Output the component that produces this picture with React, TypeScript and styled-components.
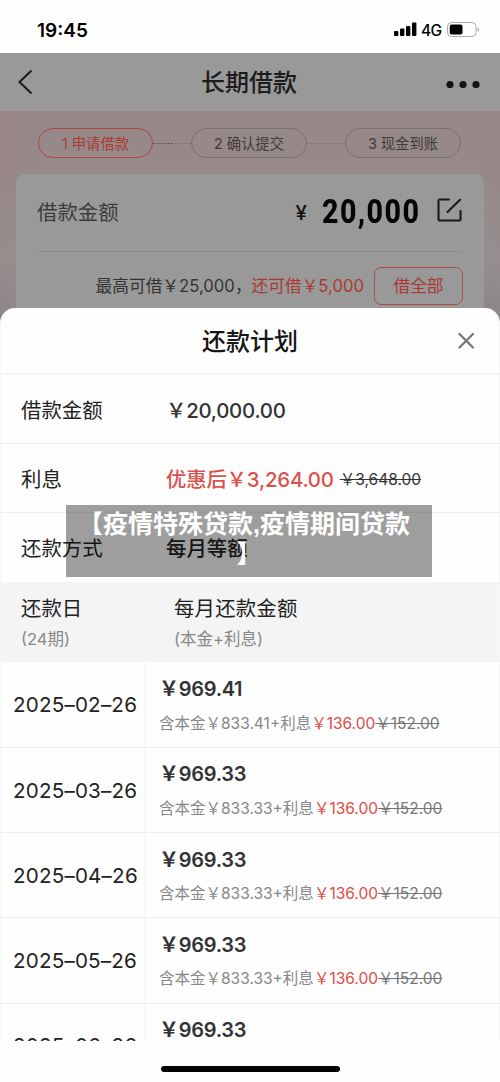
import React from "react";
import styled, { createGlobalStyle } from "styled-components";

const Global = createGlobalStyle`
  * { box-sizing: border-box; }
  body {
    margin: 0;
    background: #fff;
    font-family: Inter, "Noto Sans CJK SC", sans-serif;
    color: #222;
  }
`;

const Screen = styled.div`
  position: relative;
  width: 500px;
  height: 1082px;
  overflow: hidden;
  background: #fefefe;
  display: flex;
  flex-direction: column;
`;

const Text = styled.span<{
  $size: number;
  $color?: string;
  $weight?: number;
  $gap?: number;
  $strike?: boolean;
}>`
  display: inline-block;
  padding-top: 2px;
  font-size: ${(p) => p.$size}px;
  line-height: 1.3;
  white-space: nowrap;
  color: ${(p) => p.$color ?? "#222"};
  font-weight: ${(p) => p.$weight ?? 400};
  letter-spacing: ${(p) => p.$gap ?? 0}px;
  text-decoration: ${(p) => (p.$strike ? "line-through" : "none")};
`;

const StatusBar = styled.header`
  flex: none;
  height: 53px;
  padding: 7px 20px 0 37px;
  display: flex;
  align-items: center;
  justify-content: space-between;
`;

const NavBar = styled.nav`
  flex: none;
  height: 58px;
  padding: 0 20px 0 18px;
  background: #999;
  display: grid;
  grid-template-columns: 60px 1fr 60px;
  align-items: center;
  justify-items: center;
  > :first-child { justify-self: start; }
  > :last-child { justify-self: end; }
`;

const Backdrop = styled.section`
  flex: none;
  height: 219px;
  padding: 17px 16px 0;
  background:
    linear-gradient(90deg, rgba(160, 130, 130, 0.25), transparent 8%, transparent 95%, rgba(155, 130, 132, 0.2)),
    linear-gradient(#978888 0, #978a89 60px, #939090 150px, #868686 219px);
`;

const Steps = styled.div`
  display: flex;
  align-items: center;
  padding: 0 23px 0 22px;
`;

const Step = styled.div<{ $active?: boolean }>`
  width: ${(p) => (p.$active ? 115 : 116)}px;
  height: 30px;
  border-radius: 15px;
  border: 1px solid ${(p) => (p.$active ? "#b14542" : "#7c6f6f")};
  display: flex;
  align-items: center;
  justify-content: center;
`;

const Dash = styled.div<{ $faded?: boolean }>`
  flex: 1;
  height: 1px;
  background: repeating-linear-gradient(
    90deg,
    ${(p) => (p.$faded ? "#827575" : "#645959")} 0 2px,
    transparent 2px 3px
  );
  ${(p) => !p.$faded && "mask-image: linear-gradient(90deg, #000 52%, rgba(0, 0, 0, 0.4) 53%);"}
`;

const AmountCard = styled.div`
  margin-top: 16px;
  height: 160px;
  border-radius: 9px;
  background: #999;
  padding: 0 21px;
`;

const AmountRow = styled.div`
  height: 78px;
  border-bottom: 1px solid #8c8c8c;
  display: flex;
  align-items: center;
  justify-content: space-between;
`;

const AmountValue = styled.div`
  display: flex;
  align-items: center;
`;

const BigNumber = styled.strong`
  width: 97px;
  margin: 0 18px 0 15px;
  font: 800 32.5px/1.3 Roboto, sans-serif;
  letter-spacing: 1.6px;
  color: #050505;
  transform: scaleX(0.88);
  transform-origin: left;
`;

const EditSlot = styled.div`
  display: flex;
  padding-bottom: 5px;
  margin-right: 1px;
`;

const LimitRow = styled.div`
  height: 68px;
  display: flex;
  align-items: center;
  justify-content: flex-end;
`;

const BorrowAll = styled.button`
  width: 89px;
  height: 38px;
  margin-left: 10px;
  padding: 0;
  border: 1px solid #b04b45;
  border-radius: 7px;
  background: transparent;
  font-family: inherit;
`;

const Sheet = styled.main`
  flex: none;
  height: 733px;
  margin-top: -22px;
  border-radius: 15px 15px 0 0;
  background: #fefefe;
  border: 1px solid #f6f6f6;
  border-width: 0 1px;
  overflow: hidden;
`;

const SheetHeader = styled.div`
  height: 67px;
  border-bottom: 2px solid #f3f3f3;
  padding: 1px 24px 0;
  display: grid;
  grid-template-columns: 18px 1fr 18px;
  justify-items: center;
  align-items: center;
`;

const InfoRow = styled.div<{ $last?: boolean }>`
  height: 69px;
  border-bottom: ${(p) => (p.$last ? 0 : 1)}px solid #ededed;
  padding: ${(p) => (p.$last ? 1 : 2)}px 0 0 20px;
  display: grid;
  grid-template-columns: 145px 1fr;
  align-items: center;
`;

const InfoValue = styled.div`
  display: flex;
  align-items: center;
  gap: 6px;
`;

const TableHead = styled.div`
  height: 80px;
  padding: 0 20px;
  background: #f4f4f4;
  display: grid;
  grid-template-columns: 153px 1fr;
  align-items: center;
`;

const HeadCell = styled.div`
  display: flex;
  flex-direction: column;
  gap: 5px;
`;

const PlanList = styled.div`
  padding-top: 0.5px;
`;

const PlanRow = styled.div`
  height: 85.3px;
  border-bottom: 1px solid #ededed;
  display: grid;
  grid-template-columns: 145px 1fr;
`;

const DateCell = styled.div`
  border-right: 1px solid #f0f0f0;
  padding-left: 12px;
  display: flex;
  align-items: center;
`;

const PayCell = styled.div`
  padding: 11.5px 0 0 13px;
  display: flex;
  flex-direction: column;
  gap: 9.5px;
`;

const Detail = styled.div`
  display: flex;
`;

const HomeArea = styled.footer`
  flex: 1;
  display: flex;
  justify-content: center;
  padding-top: 25px;
`;

const HomeIndicator = styled.div`
  width: 179px;
  height: 6px;
  border-radius: 3px;
  background: #000;
`;

const Caption = styled.div`
  position: absolute;
  left: 66px;
  top: 505px;
  width: 366px;
  height: 72px;
  padding-top: 4px;
  background: rgba(0, 0, 0, 0.375);
  display: flex;
  flex-direction: column;
  align-items: center;
  color: #fff;
  font: 700 25px/30px "Liberation Sans", "Noto Sans CJK SC", sans-serif;
  white-space: nowrap;
`;

const CaptionLine = styled.span<{ $shift?: number }>`
  padding-right: ${(p) => p.$shift ?? 0}px;
`;

const StatusIcons = () => (
  <svg width="87" height="20" viewBox="0 0 87 20">
    <rect x="1" y="11" width="4.4" height="5" rx="1" />
    <rect x="7" y="8.5" width="4.4" height="7.5" rx="1" />
    <rect x="13" y="6" width="4.4" height="10" rx="1" />
    <rect x="19" y="2.5" width="4.4" height="13.5" rx="1" />
    <text x="28" y="15.5" fontFamily="Inter, sans-serif" fontSize="15.5" fontWeight="500" textLength="21">4G</text>
    <rect x="54.5" y="2.5" width="28.5" height="14" rx="4" fill="none" stroke="#aaa" />
    <rect x="56.7" y="4.5" width="12.8" height="10" rx="2" />
    <path d="M84.8 7.5c1.5.8 1.5 3.5 0 4.5z" fill="#888" />
  </svg>
);

const BackIcon = () => (
  <svg width="16" height="26" viewBox="0 0 16 26" fill="none" stroke="#1c1c1c" strokeWidth="2.1">
    <path d="M13.5 1.5 1.5 13l12 11.5" />
  </svg>
);

const MoreIcon = () => (
  <svg width="34" height="12" viewBox="0 0 34 12" fill="#141414">
    <circle cx="4" cy="8.5" r="3.6" />
    <circle cx="17" cy="8.5" r="3.6" />
    <circle cx="30" cy="8.5" r="3.6" />
  </svg>
);

const EditIcon = () => (
  <svg width="25" height="25" viewBox="0 0 25 25" fill="none" stroke="#1a1a1a" strokeWidth="2.1" strokeLinecap="round" strokeLinejoin="round">
    <path d="M12 1.5H2.5a1 1 0 0 0-1 1v19a1 1 0 0 0 1 1h20a1 1 0 0 0 1-1V13M10.5 14 23 1.8" />
  </svg>
);

const CloseIcon = () => (
  <svg width="18" height="18" viewBox="0 0 18 18" stroke="#777" strokeWidth="2.3" strokeLinecap="round">
    <path d="m2.5 2 13.5 13.5M16 2 2.5 15.5" />
  </svg>
);

const plan = [
  { date: "2025–02–26", total: "969.41", principal: "833.41" },
  { date: "2025–03–26", total: "969.33", principal: "833.33" },
  { date: "2025–04–26", total: "969.33", principal: "833.33" },
  { date: "2025–05–26", total: "969.33", principal: "833.33" },
  { date: "2025–06–26", total: "969.33", principal: "833.33" },
];

export default function App() {
  return (
    <Screen>
      <Global />
      <StatusBar>
        <Text $size={19} $weight={600} $color="#000">19:45</Text>
        <StatusIcons />
      </StatusBar>
      <NavBar>
        <BackIcon />
        <Text $size={24} $weight={500} $color="#1c1c1c">长期借款</Text>
        <MoreIcon />
      </NavBar>
      <Backdrop>
        <Steps>
          <Step $active><Text $size={14.3} $color="#ac3a36">1 申请借款</Text></Step>
          <Dash />
          <Step><Text $size={14.3} $color="#423a3a">2 确认提交</Text></Step>
          <Dash $faded />
          <Step><Text $size={14.3} $color="#423a3a">3 现金到账</Text></Step>
        </Steps>
        <AmountCard>
          <AmountRow>
            <Text $size={20.4} $color="#3b3b3b">借款金额</Text>
            <AmountValue>
              <Text $size={20.5} $weight={500} $color="#111">¥</Text>
              <BigNumber>20,000</BigNumber>
              <EditSlot><EditIcon /></EditSlot>
            </AmountValue>
          </AmountRow>
          <LimitRow>
            <Text $size={16.7} $color="#333">最高可借￥25,000，</Text>
            <Text $size={16.7} $color="#a93832">还可借￥5,000</Text>
            <BorrowAll><Text $size={16.7} $color="#a93832">借全部</Text></BorrowAll>
          </LimitRow>
        </AmountCard>
      </Backdrop>
      <Sheet>
        <SheetHeader>
          <span />
          <Text $size={24} $weight={500} $color="#171717">还款计划</Text>
          <CloseIcon />
        </SheetHeader>
        <InfoRow>
          <Text $size={20.4}>借款金额</Text>
          <Text $size={20.4} $weight={500} $gap={-0.25} $color="#333">￥20,000.00</Text>
        </InfoRow>
        <InfoRow>
          <Text $size={20.4}>利息</Text>
          <InfoValue>
            <Text $size={20.4} $weight={500} $gap={-0.2} $color="#dc514b">优惠后￥3,264.00</Text>
            <Text $size={15.5} $strike $color="#333">￥3,648.00</Text>
          </InfoValue>
        </InfoRow>
        <InfoRow $last>
          <Text $size={20.4}>还款方式</Text>
          <Text $size={20.4} $weight={500}>每月等额</Text>
        </InfoRow>
        <TableHead>
          <HeadCell>
            <Text $size={20.4}>还款日</Text>
            <Text $size={16.5} $color="#888">(24期)</Text>
          </HeadCell>
          <HeadCell>
            <Text $size={20.4} $gap={0.2}>每月还款金额</Text>
            <Text $size={16.5} $color="#888">(本金+利息)</Text>
          </HeadCell>
        </TableHead>
        <PlanList>
          {plan.map((item) => (
            <PlanRow key={item.date}>
              <DateCell><Text $size={20.6} $gap={0.2}>{item.date}</Text></DateCell>
              <PayCell>
                <Text $size={20} $weight={600} $gap={-0.3} $color="#333">￥{item.total}</Text>
                <Detail>
                  <Text $size={15.5} $color="#888">含本金￥{item.principal}+利息</Text>
                  <Text $size={15.5} $color="#e04c48">￥136.00</Text>
                  <Text $size={15.5} $color="#777" $strike>￥152.00</Text>
                </Detail>
              </PayCell>
            </PlanRow>
          ))}
        </PlanList>
      </Sheet>
      <HomeArea><HomeIndicator /></HomeArea>
      <Caption>
        <CaptionLine $shift={10}>【疫情特殊贷款,疫情期间贷款</CaptionLine>
        <CaptionLine>】</CaptionLine>
      </Caption>
    </Screen>
  );
}
